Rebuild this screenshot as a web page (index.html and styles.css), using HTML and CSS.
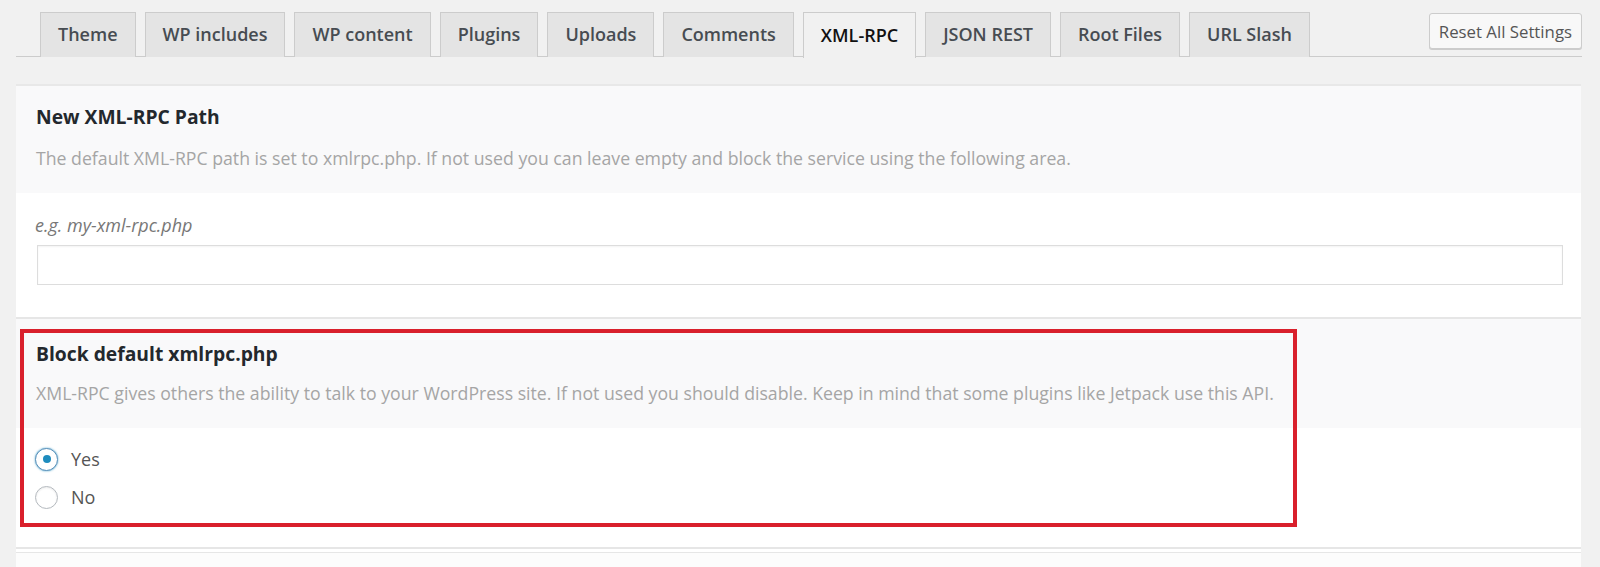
FILE: index.html
```html
<!DOCTYPE html>
<html lang="en">
<head>
<meta charset="utf-8">
<title>XML-RPC Settings</title>
<link rel="stylesheet" href="styles.css">
</head>
<body>
<div class="wrap">
  <div class="nav">
    <div class="tabs">
      <a class="tab" href="#">Theme</a>
      <a class="tab" href="#">WP includes</a>
      <a class="tab" href="#">WP content</a>
      <a class="tab" href="#">Plugins</a>
      <a class="tab" href="#">Uploads</a>
      <a class="tab" href="#">Comments</a>
      <a class="tab active" href="#">XML-RPC</a>
      <a class="tab" href="#">JSON REST</a>
      <a class="tab" href="#">Root Files</a>
      <a class="tab" href="#">URL Slash</a>
    </div>
    <button class="reset" type="button">Reset All Settings</button>
  </div>

  <div class="panel">
    <div class="section">
      <div class="head">
        <h3 class="title">New XML-RPC Path</h3>
        <p class="desc">The default XML-RPC path is set to xmlrpc.php. If not used you can leave empty and block the service using the following area.</p>
      </div>
      <div class="body body-input">
        <div class="hint">e.g. my-xml-rpc.php</div>
        <input class="field" type="text">
      </div>
    </div>

    <div class="section highlighted">
      <div class="head head2">
        <h3 class="title">Block default xmlrpc.php</h3>
        <p class="desc">XML-RPC gives others the ability to talk to your WordPress site. If not used you should disable. Keep in mind that some plugins like Jetpack use this API.</p>
      </div>
      <div class="body body-radio">
        <label class="option"><span class="radio checked"></span><span class="opt-label">Yes</span></label>
        <label class="option"><span class="radio"></span><span class="opt-label">No</span></label>
      </div>
      <div class="marker"></div>
    </div>

    <div class="section next"></div>
  </div>
</div>
</body>
</html>
```

FILE: styles.css
```css
html, body {
  margin: 0;
  padding: 0;
  background: #f1f1f1;
  font-family: "Open Sans", "Noto Sans", "Liberation Sans", sans-serif;
  color: #444;
  overflow: hidden;
}

.wrap {
  margin: 0 18px 0 16px;
}

.nav {
  display: flex;
  justify-content: space-between;
  align-items: flex-start;
  border-bottom: 1px solid #cccccc;
  height: 57px;
  padding-left: 24px;
  box-sizing: border-box;
}

.tabs {
  display: flex;
  gap: 9px;
  margin-top: 12px;
}

.tab {
  display: flex;
  align-items: center;
  height: 45px;
  box-sizing: border-box;
  padding: 0 17px 2px;
  background: #e4e4e4;
  border: 1px solid #cccccc;
  border-bottom: none;
  color: #474c52;
  font-size: 18px;
  font-weight: 600;
  text-decoration: none;
  white-space: nowrap;
}

.tab.active {
  background: #f1f1f1;
  color: #111;
  height: 46px;
  margin-bottom: -1px;
  position: relative;
}

.reset {
  margin-top: 13px;
  height: 36px;
  padding: 0 9px;
  background: #f8f8f8;
  border: 1px solid #cccccc;
  border-radius: 3px;
  box-shadow: 0 1px 0 #cccccc;
  color: #555;
  font-family: "Open Sans", "Noto Sans", "Liberation Sans", sans-serif;
  font-size: 16.8px;
}

.panel {
  margin-top: 27px;
  margin-right: 1px;
  border-top: 2px solid #e8e8e8;
  background: #ffffff;
}

.section {
  border-bottom: 2px solid #e6e6e6;
}

.head {
  background: #f9f9fa;
  padding: 19px 18px 24px 20px;
}

.head2 {
  padding-top: 23px;
}

.title {
  margin: 0;
  font-size: 19.3px;
  font-weight: 700;
  line-height: 24px;
  color: #23282d;
}

.desc {
  margin: 18px 0 0;
  font-size: 17.7px;
  line-height: 22px;
  color: #a5a5a5;
}

.head2 .desc {
  margin-top: 16px;
}

.body {
  background: #ffffff;
}

.body-input {
  padding: 21px 18px 32px 21px;
}

.hint {
  font-size: 18px;
  font-style: italic;
  line-height: 22px;
  color: #777;
  margin-left: -2px;
}

.field {
  display: block;
  margin-top: 9px;
  width: 100%;
  height: 40px;
  box-sizing: border-box;
  border: 1px solid #dddddd;
  box-shadow: inset 0 1px 2px rgba(0, 0, 0, 0.05);
  background: #fff;
}

.body-radio {
  padding: 12px 20px 31px 19px;
}

.option {
  display: flex;
  align-items: center;
  height: 38px;
  gap: 13px;
}

.radio {
  width: 23px;
  height: 23px;
  box-sizing: border-box;
  border-radius: 50%;
  border: 1px solid #b4b9be;
  background: #fff;
  box-shadow: inset 0 1px 2px rgba(0, 0, 0, 0.08);
  display: flex;
  align-items: center;
  justify-content: center;
}

.radio.checked {
  border-color: #5b8fb9;
  box-shadow: 0 0 2px rgba(30, 140, 190, 0.8);
}

.radio.checked::after {
  content: "";
  width: 8px;
  height: 8px;
  border-radius: 50%;
  background: #1e8cbe;
}

.opt-label {
  font-size: 18px;
  color: #555;
}

.highlighted {
  position: relative;
}

.marker {
  position: absolute;
  left: 4px;
  top: 10px;
  width: 1277px;
  height: 198px;
  box-sizing: border-box;
  border: 4px solid #d9202c;
  pointer-events: none;
}

.next {
  margin-top: 3px;
  border-top: 1px solid #e6e6e6;
  height: 40px;
  background: #fcfcfc;
}
```
